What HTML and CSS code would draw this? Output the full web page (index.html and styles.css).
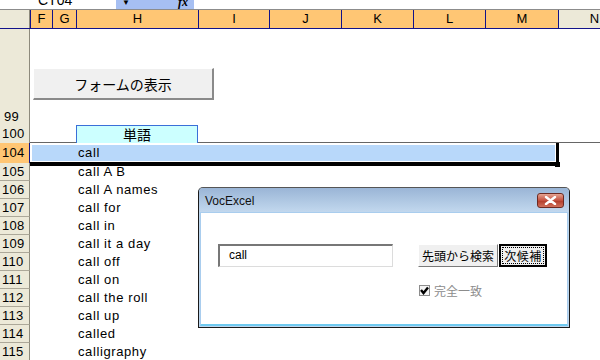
FILE: index.html
```html
<!DOCTYPE html>
<html lang="ja">
<head>
    <meta charset="UTF-8">
    <title>VocExcel</title>
    <link rel="stylesheet" href="styles.css">
</head>
<body>
    <div class="hoja">
        <!-- barra de fórmulas (cortada arriba) -->
        <div class="barra-formula">
            <div class="cuadro-nombre"><span>CT04</span></div>
            <div class="zona-fx"><span class="flecha">▼</span><span class="fx">fx</span></div>
        </div>

        <!-- cabecera de columnas -->
        <div class="fila cabecera">
            <div class="esquina"></div>
            <div class="ch sel">F</div>
            <div class="ch sel">G</div>
            <div class="ch sel">H</div>
            <div class="ch sel">I</div>
            <div class="ch sel">J</div>
            <div class="ch sel">K</div>
            <div class="ch sel">L</div>
            <div class="ch sel">M</div>
            <div class="ch">N</div>
        </div>

        <div class="fila alta">
            <div class="rh abajo">99</div>
        </div>
        <div class="fila congelada">
            <div class="rh">100</div>
            <div class="celda-h titulo">単語</div>
        </div>
        <div class="fila activa">
            <div class="rh rh-sel">104</div>
            <div class="seleccion">
                <div class="relleno"><span class="texto">call</span></div>
                <span class="tirador"></span>
            </div>
        </div>
        <div class="fila"><div class="rh">105</div><div class="celda-h">call A B</div></div>
        <div class="fila"><div class="rh">106</div><div class="celda-h">call A names</div></div>
        <div class="fila"><div class="rh">107</div><div class="celda-h">call for</div></div>
        <div class="fila"><div class="rh">108</div><div class="celda-h">call in</div></div>
        <div class="fila"><div class="rh">109</div><div class="celda-h">call it a day</div></div>
        <div class="fila"><div class="rh">110</div><div class="celda-h">call off</div></div>
        <div class="fila"><div class="rh">111</div><div class="celda-h">call on</div></div>
        <div class="fila"><div class="rh">112</div><div class="celda-h">call the roll</div></div>
        <div class="fila"><div class="rh">113</div><div class="celda-h">call up</div></div>
        <div class="fila"><div class="rh">114</div><div class="celda-h">called</div></div>
        <div class="fila"><div class="rh">115</div><div class="celda-h">calligraphy</div></div>

        <!-- botón de formulario sobre la hoja -->
        <button class="boton-form">フォームの表示</button>

        <!-- ventana VocExcel -->
        <div class="dialogo">
            <div class="titulo-ventana">
                <span class="nombre-ventana">VocExcel</span>
                <span class="cerrar">
                    <svg width="13" height="9" viewBox="0 0 13 9"><path d="M2 1 L11 8 M11 1 L2 8" stroke="#fff" stroke-width="2.4" stroke-linecap="round"/></svg>
                </span>
            </div>
            <div class="cuerpo">
                <div class="linea-busqueda">
                    <div class="caja-texto">call</div>
                    <div class="botones">
                        <button class="btn">先頭から検索</button>
                        <button class="btn defecto"><span>次候補</span></button>
                    </div>
                </div>
                <label class="opcion">
                    <span class="casilla">
                        <svg width="9" height="9" viewBox="0 0 9 9"><path d="M1 4 L3.5 7 L8 1.5" fill="none" stroke="#000" stroke-width="2.4"/></svg>
                    </span>
                    完全一致
                </label>
            </div>
        </div>
    </div>
</body>
</html>
```

FILE: styles.css
```css
html, body { margin: 0; padding: 0; }
body {
    width: 600px;
    height: 360px;
    overflow: hidden;
    background: #fff;
    font-family: "Liberation Sans", Arial, "Noto Sans CJK JP", sans-serif;
    font-size: 13px;
    color: #000;
}
.hoja {
    position: relative;
    width: 600px;
    height: 360px;
    overflow: hidden;
}

/* barra de fórmulas */
.barra-formula {
    display: flex;
    height: 9px;
    border-bottom: 1px solid #8c8c8c;
    overflow: hidden;
}
.cuadro-nombre {
    width: 116px;
    background: #fff;
    position: relative;
}
.cuadro-nombre span {
    display: block;
    margin: -7px 0 0 38px;
    font-size: 14px;
    line-height: 14px;
}
.zona-fx {
    width: 78px;
    background: #a6bff2;
    display: flex;
    justify-content: space-between;
    padding: 0 6px 0 6px;
    box-sizing: border-box;
    font-size: 10px;
    line-height: 6px;
}
.flecha { font-size: 8px; }
.fx { font-style: italic; font-family: "Liberation Serif", serif; font-weight: bold; font-size: 12px; line-height: 4px; }

/* rejilla común */
.fila {
    display: grid;
    grid-template-columns: 30px 22px 24px 122px 71px 72px 72px 72px 73px 72px;
    height: 18px;
    box-sizing: border-box;
}
.rh {
    grid-column: 1;
    background: #ece9d8;
    border-right: 1px solid #8d8a7c;
    border-bottom: 1px solid #aca899;
    box-sizing: border-box;
    font-size: 13px;
    line-height: 17px;
    padding-left: 2px;
    letter-spacing: 0.3px;
}

/* cabecera de columnas */
.cabecera {
    height: 19px;
    border-bottom: 1px solid #12128a;
}
.esquina {
    background: #ece9d8;
    border-right: 1px solid #8d8a7c;
}
.ch {
    background: #ece9d8;
    border-left: 1px solid #12128a;
    text-align: center;
    line-height: 18px;
    font-size: 13px;
}
.ch.sel { background: #ffc674; }

/* filas */
.alta { height: 96px; }
.rh.abajo {
    display: flex;
    align-items: flex-end;
    padding-left: 4px;
    border-bottom: none;
}
.congelada {
    border-bottom: 1px solid #666;
}
.congelada .rh { border-bottom: none; }
.celda-h {
    grid-column: 4;
    padding-left: 2px;
    line-height: 18px;
    letter-spacing: 0.6px;
    white-space: nowrap;
}
.titulo {
    background: #ccffff;
    border: 1px solid #3a6fd8;
    border-bottom: none;
    text-align: center;
    padding: 0;
    font-family: "Noto Sans CJK JP", sans-serif;
    font-size: 14px;
    line-height: 17px;
    letter-spacing: 0;
}

.activa { height: 20px; }
.rh-sel {
    background: #ffc674;
    border-right: 1px solid #12128a;
    border-bottom: 1px solid #12128a;
    line-height: 20px;
}
.seleccion {
    grid-column: 2 / 10;
    position: relative;
    border-right: 3px solid #000;
    border-bottom: 4px solid #000;
    padding: 2px 1px 1px 2px;
    box-sizing: border-box;
    margin-right: -1px;
}
.relleno {
    height: 100%;
    background: #b8d8fa;
    display: grid;
    grid-template-columns: 46px 1fr;
}
.relleno .texto {
    grid-column: 2;
    line-height: 16px;
    letter-spacing: 0.6px;
}
.tirador {
    position: absolute;
    right: -4px;
    bottom: -5px;
    width: 5px;
    height: 5px;
    background: #000;
}

/* botón de formulario */
.boton-form {
    position: absolute;
    left: 33px;
    top: 68px;
    width: 181px;
    height: 32px;
    background: #f0f0f0;
    border: none;
    border-top: 1px solid #fff;
    border-left: 1px solid #fff;
    border-right: 2px solid #8a8a8a;
    border-bottom: 2px solid #8a8a8a;
    font-family: "Noto Sans CJK JP", sans-serif;
    font-size: 14px;
    padding: 0;
    color: #000;
}

/* ventana */
.dialogo {
    position: absolute;
    left: 198px;
    top: 187px;
    width: 372px;
    height: 141px;
    box-sizing: border-box;
    border: 1px solid #1a1a1a;
    border-top-color: #555;
    border-radius: 5px 5px 0 0;
    background: #bcd6ee;
    padding: 0 1px 1px 1px;
    display: flex;
    flex-direction: column;
}
.titulo-ventana {
    height: 24px;
    margin: 0 -1px;
    border-radius: 4px 4px 0 0;
    background: linear-gradient(#9ab5d6, #c2d8ee);
    display: flex;
    align-items: center;
    justify-content: space-between;
    padding: 0 5px 0 6px;
}
.nombre-ventana {
    font-family: "Liberation Sans", Arial, sans-serif;
    font-size: 12px;
    color: #111;
    margin-top: 2px;
}
.cerrar {
    width: 27px;
    height: 15px;
    box-sizing: border-box;
    border: 1px solid #6d2a22;
    border-radius: 3px;
    background: linear-gradient(#e5a492, #c4503e 50%, #b23a28 51%, #d0715c);
    display: flex;
    align-items: center;
    justify-content: center;
}
.cuerpo {
    flex: 1;
    background: #fff;
    border: 1px solid #a9cdee;
    border-bottom: 2px solid #6fcaf0;
    padding: 31px 0 0 17px;
}
.linea-busqueda {
    display: flex;
    align-items: center;
}
.caja-texto {
    width: 175px;
    height: 23px;
    box-sizing: border-box;
    border: 2px solid #dcdcdc;
    border-top-color: #777;
    border-left-color: #777;
    border-right-width: 1px;
    border-bottom-width: 1px;
    padding-left: 9px;
    font-size: 12px;
    line-height: 19px;
}
.botones {
    display: flex;
    gap: 1px;
    margin-left: 25px;
}
.btn {
    height: 23px;
    box-sizing: border-box;
    background: #f0f0f0;
    border: 1px solid #fff;
    border-right-color: #7a7a7a;
    border-bottom-color: #7a7a7a;
    font-family: "Noto Sans CJK JP", sans-serif;
    font-size: 12px;
    padding: 0 3px;
    color: #000;
    line-height: 20px;
}
.btn.defecto {
    border: 2px solid #000;
    padding: 1px;
    width: 48px;
}
.btn.defecto span {
    display: block;
    border: 1px dotted #000;
    line-height: 15px;
    letter-spacing: 0.5px;
}
.opcion {
    display: flex;
    align-items: center;
    gap: 4px;
    margin: 15px 0 0 201px;
    font-family: "Noto Sans CJK JP", sans-serif;
    font-size: 12px;
    color: #8c8c8c;
}
.casilla {
    width: 11px;
    height: 11px;
    box-sizing: border-box;
    border: 1px solid #8c8c8c;
    background: #f4f4f4;
    display: flex;
    align-items: center;
    justify-content: center;
}
```
